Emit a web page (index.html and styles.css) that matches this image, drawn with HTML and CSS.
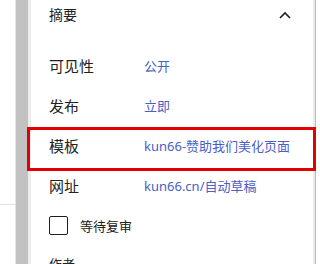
FILE: index.html
```html
<!DOCTYPE html>
<html lang="zh-CN">
<head>
<meta charset="utf-8">
<title>摘要</title>
<link rel="stylesheet" href="styles.css">
</head>
<body>
<div class="page">
  <div class="gutter"><div class="gutter-top"></div></div>
  <div class="rail"><div class="thumb"></div><div class="thumb-edge"></div></div>
  <section class="panel">
    <header class="panel-head">
      <span class="panel-title">摘要</span>
      <svg class="chevron" width="12" height="8" viewBox="0 0 12 8"><path d="M1 7 L6 2 L11 7" fill="none" stroke="#1e1e1e" stroke-width="1.6"/></svg>
    </header>
    <div class="rows">
      <div class="row"><span class="label">可见性</span><span class="value">公开</span></div>
      <div class="row"><span class="label">发布</span><span class="value">立即</span></div>
      <div class="row highlighted"><span class="label">模板</span><span class="value">kun66-赞助我们美化页面</span></div>
      <div class="row"><span class="label">网址</span><span class="value">kun66.cn/自动草稿</span></div>
      <div class="row check-row"><span class="checkbox"></span><span class="check-label">等待复审</span></div>
      <div class="author">作者</div>
    </div>
  </section>
  <div class="edge"></div>
</div>
</body>
</html>
```

FILE: styles.css
```css
* { box-sizing: border-box; }
html, body { margin: 0; padding: 0; background: #fff; }
body {
  width: 316px;
  height: 264px;
  overflow: hidden;
  font-family: "Noto Sans", "Noto Sans CJK SC", sans-serif;
  color: #1e1e1e;
}
.page {
  display: flex;
  height: 264px;
}
.gutter {
  width: 15px;
  flex: none;
}
.gutter-top {
  height: 205px;
  border-bottom: 1px solid #e2e2e2;
}
.rail {
  display: flex;
  flex: none;
  border-left: 1px solid #e4e4e4;
}
.thumb {
  width: 12px;
  background: #c2c2c2;
}
.thumb-edge {
  width: 3px;
  background: #ececec;
}
.panel {
  flex: 1;
  padding-left: 18px;
  position: relative;
}
.panel-head {
  height: 30px;
  display: flex;
  align-items: center;
  justify-content: space-between;
  padding-right: 22px;
}
.panel-title {
  font-size: 14px;
  line-height: 20px;
}
.chevron { display: block; margin-top: -1px; }
.rows { padding-top: 15px; }
.row {
  height: 40px;
  display: flex;
  align-items: center;
  position: relative;
}
.label {
  width: 95px;
  flex: none;
  font-size: 15px;
  color: #222;
}
.value {
  font-size: 13px;
  color: #4a60c6;
  white-space: nowrap;
}
.highlighted::after {
  content: "";
  position: absolute;
  left: -22px;
  top: 2px;
  width: 283px;
  height: 38px;
  border: 3px solid #e30000;
  pointer-events: none;
}
.checkbox {
  width: 19px;
  height: 19px;
  border: 1.5px solid #1e1e1e;
  border-radius: 2px;
  flex: none;
}
.check-label {
  margin-left: 12px;
  font-size: 13px;
  color: #222;
}
.author {
  margin-top: 9px;
  font-size: 13px;
  line-height: 20px;
  color: #222;
}
.edge {
  width: 3px;
  flex: none;
  background: #ebebeb;
  border-right: 1px solid #b8b8b8;
}
```
